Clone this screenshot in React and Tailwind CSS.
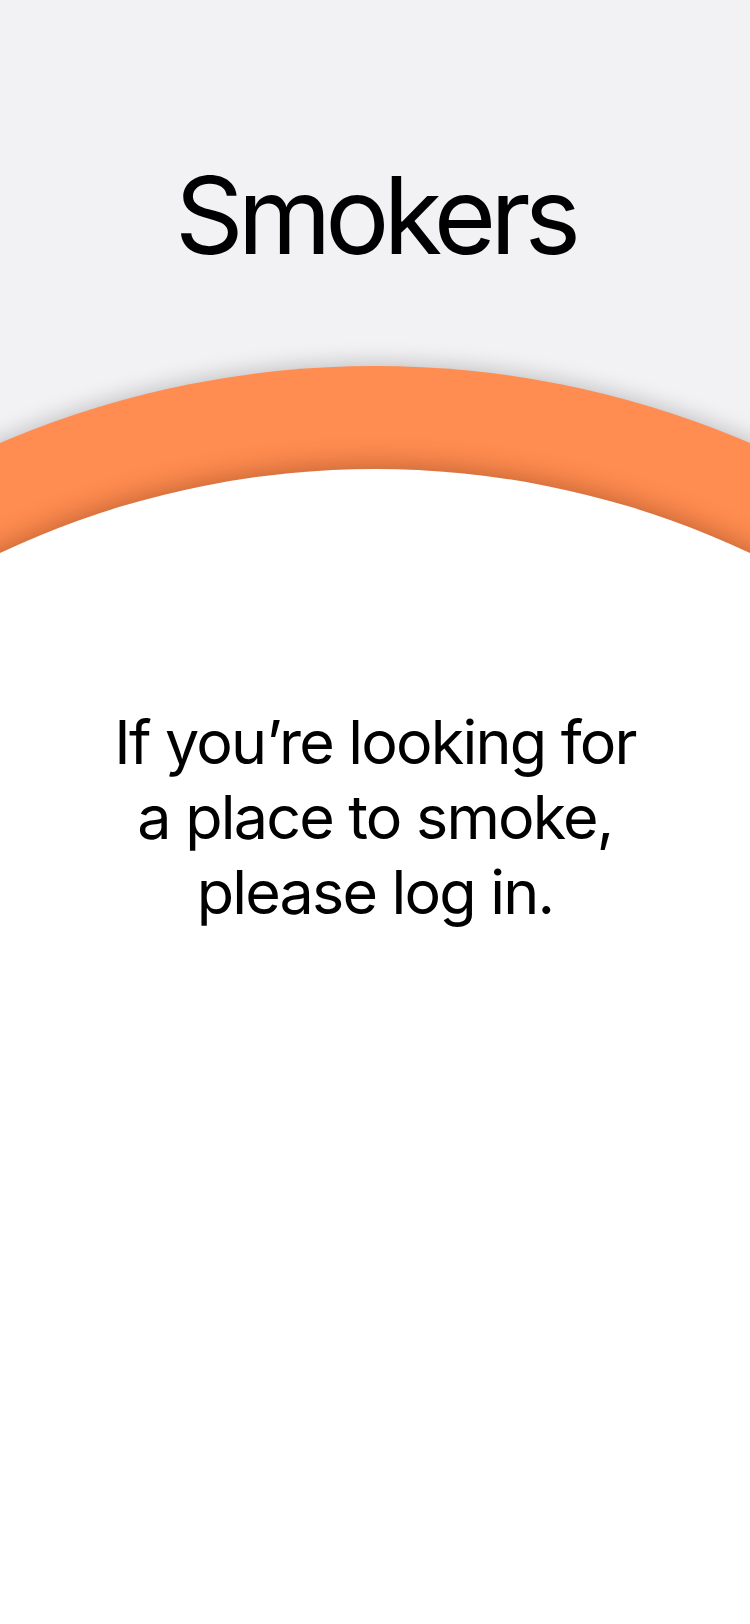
export default function App() {
  return (
    <div className="relative w-[750px] h-[1624px] overflow-hidden bg-[#f2f2f5] font-['Inter','Roboto',sans-serif] text-black">
      {/* Title */}
      <header className="h-[366px] pt-[162px] flex justify-center">
        <h1 className="text-[107px] leading-none font-normal tracking-[-6px]">Smokers</h1>
      </header>

      {/* Orange ring */}
      <div className="ml-[-577px] w-[1904px] h-[1904px] rounded-full bg-[#ff8c50] pt-[103px] shadow-[0_-2px_22px_rgba(0,0,0,0.22)]">
        <div className="mx-auto w-[1758px] h-[1758px] rounded-full bg-white shadow-[0_-4px_26px_rgba(90,30,0,0.35)]">
          <div className="mx-auto w-[750px] pt-[236px] px-6">
            <p className="text-center text-[61px] leading-[75px] font-normal tracking-[-1.8px]">
              If you’re looking for
              <br />
              a place to smoke,
              <br />
              please log in.
            </p>
          </div>
        </div>
      </div>
    </div>
  );
}
